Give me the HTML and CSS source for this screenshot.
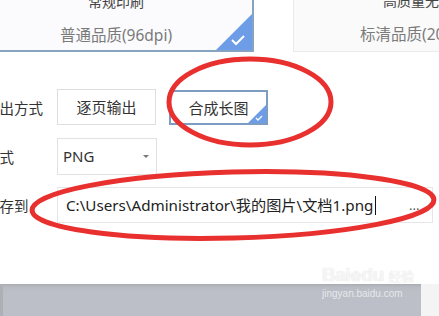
FILE: index.html
```html
<!DOCTYPE html>
<html>
<head>
<meta charset="utf-8">
<link rel="stylesheet" href="styles.css">
</head>
<body>
<div class="page">
  <div class="dialog">
    <div class="cards">
      <div class="card card-active">
        <div class="card-title">常规印刷</div>
        <div class="card-sub">普通品质(96dpi)</div>
        <span class="corner corner-lg"><svg viewBox="0 0 36 36" width="36" height="36"><path d="M36 0 L36 36 L0 36 Z" fill="#6d9de6"/><path d="M16 26 L20 30 L28 22" fill="none" stroke="#fff" stroke-width="2"/></svg></span>
      </div>
      <div class="card">
        <div class="card-title card-title-r">高质量无损打印</div>
        <div class="card-sub card-sub-r">标清品质(200dpi)</div>
      </div>
    </div>
    <div class="form">
      <div class="row">
        <div class="label">输出方式</div>
        <div class="btn">逐页输出</div>
        <div class="btn btn-active">合成长图<span class="corner corner-sm"><svg viewBox="0 0 18 18" width="18" height="18"><path d="M18 0 L18 18 L0 18 Z" fill="#6d9de6"/><path d="M8 13 L10 15 L14 11" fill="none" stroke="#fff" stroke-width="1.3"/></svg></span></div>
      </div>
      <div class="row">
        <div class="label">格式</div>
        <div class="select"><span>PNG</span><span class="caret"></span></div>
      </div>
      <div class="row">
        <div class="label">保存到</div>
        <div class="input"><span class="path">C:\Users\Administrator\我的图片\文档1.png</span><span class="cursor"></span><span class="more">...</span></div>
      </div>
    </div>
  </div>
  <div class="backdrop">
    <div class="backdrop-main"></div>
    <div class="backdrop-side"></div>
  </div>
  <div class="watermark">
    <div class="wm-logo">Bai<span class="paw">❀</span>du <span class="wm-cn">经验</span></div>
    <div class="wm-url">jingyan.baidu.com</div>
  </div>
  <svg class="marks" width="439" height="316" viewBox="0 0 439 316">
    <ellipse cx="250" cy="102" rx="81" ry="43" fill="none" stroke="#e8302f" stroke-width="5"/>
    <ellipse cx="233" cy="205" rx="201" ry="33" fill="none" stroke="#e8302f" stroke-width="5" transform="rotate(-1.5 233 205)"/>
  </svg>
</div>
</body>
</html>
```

FILE: styles.css
```css
* { box-sizing: border-box; }
html, body { margin: 0; padding: 0; }
body {
  width: 439px;
  height: 316px;
  overflow: hidden;
  background: #fff;
  font-family: "Noto Sans", "Noto Sans CJK SC", sans-serif;
  color: #333;
}
.page {
  position: relative;
  width: 439px;
  height: 316px;
  overflow: hidden;
}
.dialog {
  height: 284px;
  background: #fff;
  overflow: hidden;
}
.cards {
  display: flex;
  gap: 39px;
  margin-left: -20px;
  margin-top: -20px;
}
.card {
  position: relative;
  width: 200px;
  height: 72px;
  padding-top: 10px;
  background: #fafafa;
  border: 1px solid #ebebeb;
  text-align: center;
  flex: none;
}
.card-active {
  width: 274px;
  background: #fbfbfd;
  border: 2px solid #86a3c2;
  border-left: none;
}
.card-title {
  font-size: 14px;
  line-height: 20px;
  color: #444;
}
.card-sub {
  margin-top: 13px;
  font-size: 15.5px;
  line-height: 20px;
  color: #7a7a7a;
}
.card-title-r, .card-sub-r { text-align: left; }
.card-title-r { padding-left: 89px; }
.card-sub-r { padding-left: 66px; }
.corner {
  position: absolute;
  right: -1px;
  bottom: -1px;
  line-height: 0;
}
.corner-lg { right: 0; bottom: 0; }
.form {
  margin-top: 37px;
  margin-left: -15px;
  display: flex;
  flex-direction: column;
  gap: 13px;
}
.row {
  display: flex;
  align-items: center;
  gap: 13px;
}
.row:nth-child(3) { margin-top: -1px; }
.label {
  width: 59px;
  font-size: 14.5px;
  color: #333;
  flex: none;
}
.btn {
  position: relative;
  width: 99px;
  height: 36px;
  border: 1px solid #dedede;
  font-size: 15px;
  line-height: 34px;
  text-align: center;
  color: #333;
  flex: none;
}
.btn-active {
  border: 2px solid #7d9cc2;
  line-height: 32px;
  height: 35px;
}
.btn-active .corner { right: 0; bottom: 0; }
.select {
  position: relative;
  width: 100px;
  height: 37px;
  border: 1px solid #e2e2e2;
  padding-left: 5px;
  font-size: 15px;
  line-height: 35px;
  color: #333;
}
.caret {
  position: absolute;
  left: 85px;
  top: 16px;
  border-left: 3px solid transparent;
  border-right: 3px solid transparent;
  border-top: 3px solid #777;
}
.input {
  position: relative;
  width: 376px;
  height: 36px;
  border: 1px solid #e6e6e6;
  padding-left: 8px;
  font-size: 15.2px;
  line-height: 34px;
  color: #222;
  display: flex;
  align-items: center;
  white-space: nowrap;
}
.cursor {
  display: inline-block;
  width: 1px;
  height: 19px;
  background: #111;
  margin-left: 2px;
}
.more {
  position: absolute;
  left: 351px;
  top: 0;
  color: #555;
  font-size: 13px;
}
.backdrop {
  display: flex;
  height: 32px;
}
.backdrop-main {
  width: 421px;
  background: linear-gradient(#a9acb2 0px, #b8bbc2 3px, #bcbfc7 8px);
  border-left: 3px solid #aeb0b6;
}
.backdrop-side {
  flex: 1;
  background: #f4f4f4;
}
.watermark {
  position: absolute;
  left: 322px;
  top: 264px;
  color: rgba(255,255,255,0.8);
  font-family: "Liberation Sans", sans-serif;
  text-shadow: 0 0 1px rgba(0,0,0,0.18);
}
.wm-logo {
  font-size: 19px;
  font-weight: bold;
  line-height: 22px;
  letter-spacing: -0.5px;
}
.paw { font-size: 14px; }
.wm-cn {
  font-family: "Noto Sans CJK SC", sans-serif;
  font-size: 13px;
  font-weight: normal;
}
.wm-url {
  font-size: 10px;
  line-height: 12px;
  margin-top: 1px;
  color: rgba(255,255,255,0.65);
  text-shadow: none;
}
.marks {
  position: absolute;
  left: 0;
  top: 0;
  pointer-events: none;
}
```
